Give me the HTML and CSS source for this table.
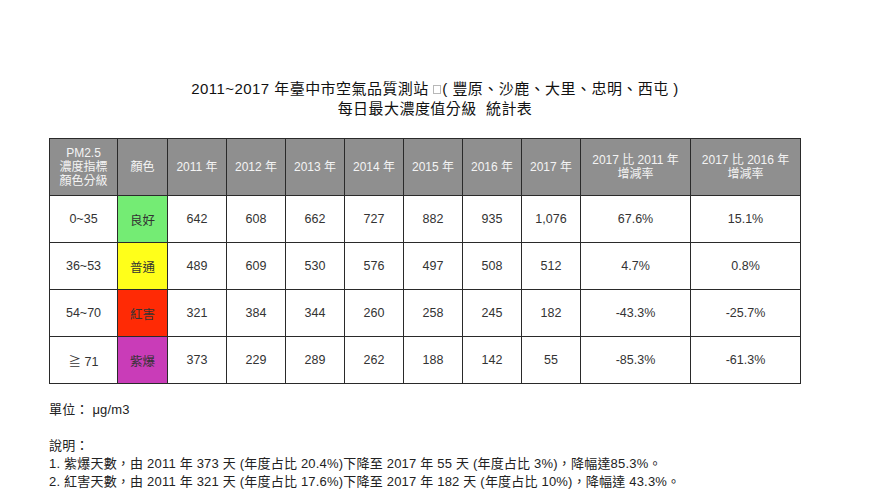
FILE: index.html
```html
<!DOCTYPE html>
<html lang="zh-Hant">
<head>
<meta charset="utf-8">
<title>2011~2017 臺中市空氣品質測站 PM2.5 統計表</title>
<link rel="stylesheet" href="styles.css">
</head>
<body>
<div class="page">
  <div class="title">
    <div class="title-line">2011~2017 年臺中市空氣品質測站 <span class="box"></span>( 豐原、沙鹿、大里、忠明、西屯 )</div>
    <div class="title-line">每日最大濃度值分級&nbsp;&nbsp;統計表</div>
  </div>

  <table class="stats">
    <colgroup>
      <col class="c-range"><col class="c-color">
      <col class="c-year"><col class="c-year"><col class="c-year"><col class="c-year">
      <col class="c-year"><col class="c-year"><col class="c-year">
      <col class="c-rate"><col class="c-rate">
    </colgroup>
    <thead>
      <tr>
        <th>PM2.5<br>濃度指標<br>顏色分級</th>
        <th>顏色</th>
        <th>2011 年</th>
        <th>2012 年</th>
        <th>2013 年</th>
        <th>2014 年</th>
        <th>2015 年</th>
        <th>2016 年</th>
        <th>2017 年</th>
        <th>2017 比 2011 年<br>增減率</th>
        <th>2017 比 2016 年<br>增減率</th>
      </tr>
    </thead>
    <tbody>
      <tr>
        <td>0~35</td><td class="lvl good">良好</td>
        <td>642</td><td>608</td><td>662</td><td>727</td><td>882</td><td>935</td><td>1,076</td>
        <td>67.6%</td><td>15.1%</td>
      </tr>
      <tr>
        <td>36~53</td><td class="lvl normal">普通</td>
        <td>489</td><td>609</td><td>530</td><td>576</td><td>497</td><td>508</td><td>512</td>
        <td>4.7%</td><td>0.8%</td>
      </tr>
      <tr>
        <td>54~70</td><td class="lvl red">紅害</td>
        <td>321</td><td>384</td><td>344</td><td>260</td><td>258</td><td>245</td><td>182</td>
        <td>-43.3%</td><td>-25.7%</td>
      </tr>
      <tr>
        <td>≧ 71</td><td class="lvl purple">紫爆</td>
        <td>373</td><td>229</td><td>289</td><td>262</td><td>188</td><td>142</td><td>55</td>
        <td>-85.3%</td><td>-61.3%</td>
      </tr>
    </tbody>
  </table>

  <div class="notes">
    <p>單位： μg/m3</p>
    <p class="blank">&nbsp;</p>
    <p>說明：</p>
    <p>1. 紫爆天數，由 2011 年 373 天 (年度占比 20.4%)下降至 2017 年 55 天 (年度占比 3%)，降幅達85.3%。</p>
    <p>2. 紅害天數，由 2011 年 321 天 (年度占比 17.6%)下降至 2017 年 182 天 (年度占比 10%)，降幅達 43.3%。</p>
  </div>
</div>
</body>
</html>
```

FILE: styles.css
```css
html, body {
  margin: 0;
  padding: 0;
  background: #ffffff;
}

body {
  font-family: "Liberation Sans", "Noto Sans CJK TC", sans-serif;
  color: #222;
}

.page {
  padding: 79px 0 0 49px;
}

.title {
  margin-left: -49px;
  text-align: center;
  font-size: 15px;
  line-height: 20px;
  letter-spacing: 0.45px;
  color: #111;
}

.box {
  display: inline-block;
  width: 6px;
  height: 7px;
  border: 1px solid #b8b8b8;
  vertical-align: 0;
  margin-right: 1px;
}

.stats {
  margin-top: 19px;
  border-collapse: collapse;
  table-layout: fixed;
  width: 751px;
  font-size: 12.5px;
}

.c-range { width: 68px; }
.c-color { width: 50px; }
.c-year { width: 59px; }
.c-rate { width: 110px; }

.stats th,
.stats td {
  border: 1px solid #2a2a2a;
  text-align: center;
  padding: 0;
}

.stats th {
  height: 56px;
  background: #8f8f8f;
  color: #f4f4f4;
  font-weight: normal;
  font-size: 12px;
  line-height: 14px;
}

.stats td {
  height: 46px;
  color: #333;
}

.lvl {
  color: #3a2a1a;
}

.good { background: #74ec74; }
.normal { background: #ffff1a; }
.red { background: #ff2a05; color: #5a1000; }
.purple { background: #c93cb8; color: #4a1a40; }

.notes {
  margin-top: 17px;
  font-size: 13px;
  line-height: 18px;
  letter-spacing: 0.2px;
  color: #222;
}

.notes p {
  margin: 0;
}
```
